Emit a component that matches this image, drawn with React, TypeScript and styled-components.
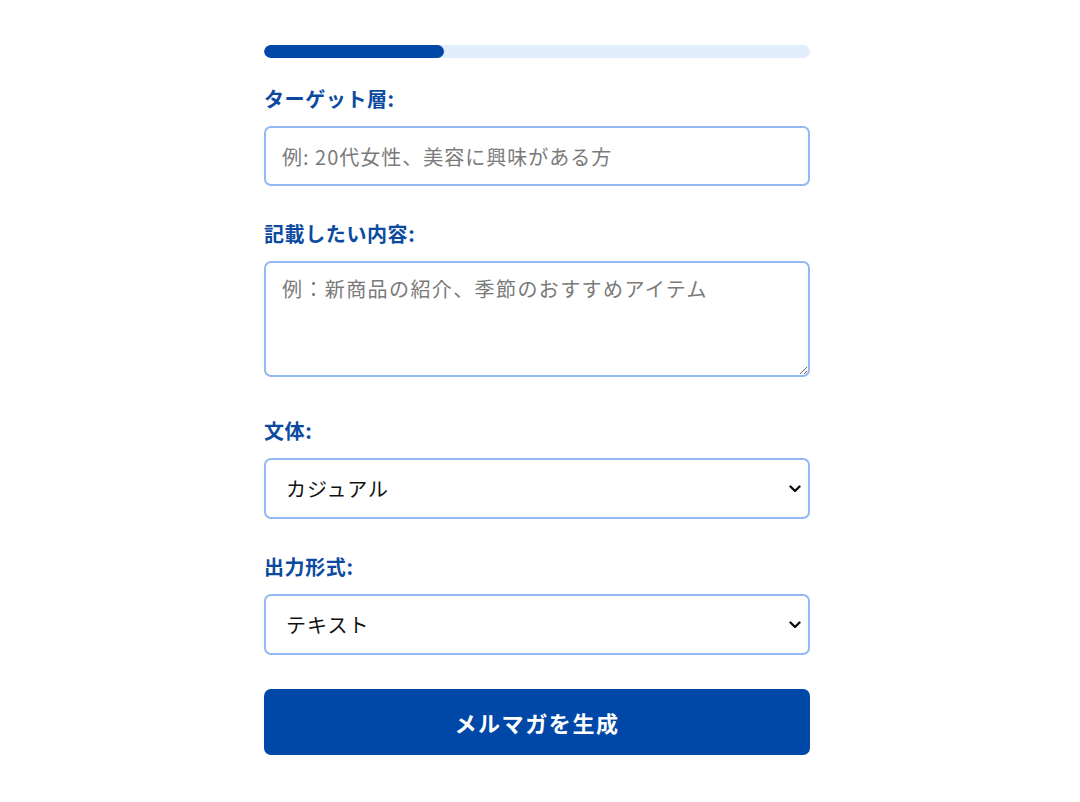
import React from 'react';
import styled, {createGlobalStyle} from "styled-components";

const GlobalStyle = createGlobalStyle`
  * {
    box-sizing: border-box;
  }
  body {
    margin: 0;
    background: #ffffff;
    font-family: "Noto Sans CJK JP", "Noto Sans", sans-serif;
  }
`

type FieldPropsType = {
    label: string
    children: React.ReactNode
}

const Field = (props: FieldPropsType) => {
    return (
        <StyledField>
            <Label>{props.label}</Label>
            {props.children}
        </StyledField>
    );
};

type SelectBoxPropsType = {
    defaultValue: string
    options: { value: string, title: string }[]
}

const SelectBox = (props: SelectBoxPropsType) => {
    return (
        <SelectWrapper>
            <Select defaultValue={props.defaultValue}>
                {props.options.map(o => <option key={o.value} value={o.value}>{o.title}</option>)}
            </Select>
            <Chevron width="12" height="8" viewBox="0 0 12 8">
                <path d="M1.5 1.5 L6 6 L10.5 1.5" fill="none" stroke="#111" strokeWidth="2.4"
                      strokeLinecap="round" strokeLinejoin="round"/>
            </Chevron>
        </SelectWrapper>
    );
};

export default function App() {
    return (
        <>
            <GlobalStyle/>
            <Page>
                <Form onSubmit={e => e.preventDefault()}>
                    <Progress>
                        <ProgressFill percent={33}/>
                    </Progress>

                    <Field label={'ターゲット層:'}>
                        <TextInput type="text" placeholder="例: 20代女性、美容に興味がある方"/>
                    </Field>

                    <Field label={'記載したい内容:'}>
                        <TextArea placeholder="例：新商品の紹介、季節のおすすめアイテム"/>
                    </Field>

                    <Field label={'文体:'}>
                        <SelectBox defaultValue="casual" options={[
                            {value: 'casual', title: 'カジュアル'},
                            {value: 'formal', title: 'フォーマル'},
                        ]}/>
                    </Field>

                    <Field label={'出力形式:'}>
                        <SelectBox defaultValue="text" options={[
                            {value: 'text', title: 'テキスト'},
                            {value: 'html', title: 'HTML'},
                        ]}/>
                    </Field>

                    <SubmitButton type="submit">メルマガを生成</SubmitButton>
                </Form>
            </Page>
        </>
    );
}

const Page = styled.div`
  display: flex;
  justify-content: center;
  padding: 45px 6px 40px 0;
`

const Form = styled.form`
  display: flex;
  flex-direction: column;
  width: 546px;
`

const Progress = styled.div`
  width: 100%;
  height: 13px;
  border-radius: 7px;
  background: #e3eefc;
  overflow: hidden;
  margin-bottom: 27px;
`

const ProgressFill = styled.div<{ percent: number }>`
  width: ${props => props.percent}%;
  height: 100%;
  border-radius: 7px;
  background: #0048a8;
`

const StyledField = styled.div`
  display: flex;
  flex-direction: column;
  margin-bottom: 34px;
`

const Label = styled.label`
  display: block;
  font-size: 20px;
  line-height: 27px;
  font-weight: 700;
  letter-spacing: 0.6px;
  color: #0b4a9f;
  margin-bottom: 14px;
`

const controlBase = `
  width: 100%;
  border: 2px solid #93b8f3;
  border-radius: 7px;
  background: #ffffff;
  font-family: "Noto Sans CJK JP", "Noto Sans", sans-serif;
  font-size: 20px;
  letter-spacing: 1px;
  color: #222222;
  outline: none;

  &::placeholder {
    color: #7a7a7a;
  }
`

const TextInput = styled.input`
  ${controlBase};
  height: 60px;
  padding: 0 16px;
`

const TextArea = styled.textarea`
  ${controlBase};
  display: block;
  height: 116px;
  padding: 12px 16px;
  margin-bottom: 6px;
  line-height: 1.4;
  letter-spacing: 1.4px;
  resize: vertical;
`

const SelectWrapper = styled.div`
  position: relative;
  width: 100%;
`

const Select = styled.select`
  ${controlBase};
  display: block;
  height: 61px;
  padding: 0 40px 0 20px;
  color: #111111;
  appearance: none;
  -webkit-appearance: none;
  cursor: pointer;
`

const Chevron = styled.svg`
  position: absolute;
  right: 9px;
  top: 50%;
  transform: translateY(-50%);
  pointer-events: none;
`

const SubmitButton = styled.button`
  width: 100%;
  height: 66px;
  border: none;
  border-radius: 7px;
  background: #0048a8;
  color: #ffffff;
  font-family: "Noto Sans CJK JP", "Noto Sans", sans-serif;
  font-size: 22px;
  font-weight: 700;
  letter-spacing: 1.6px;
  cursor: pointer;
`
